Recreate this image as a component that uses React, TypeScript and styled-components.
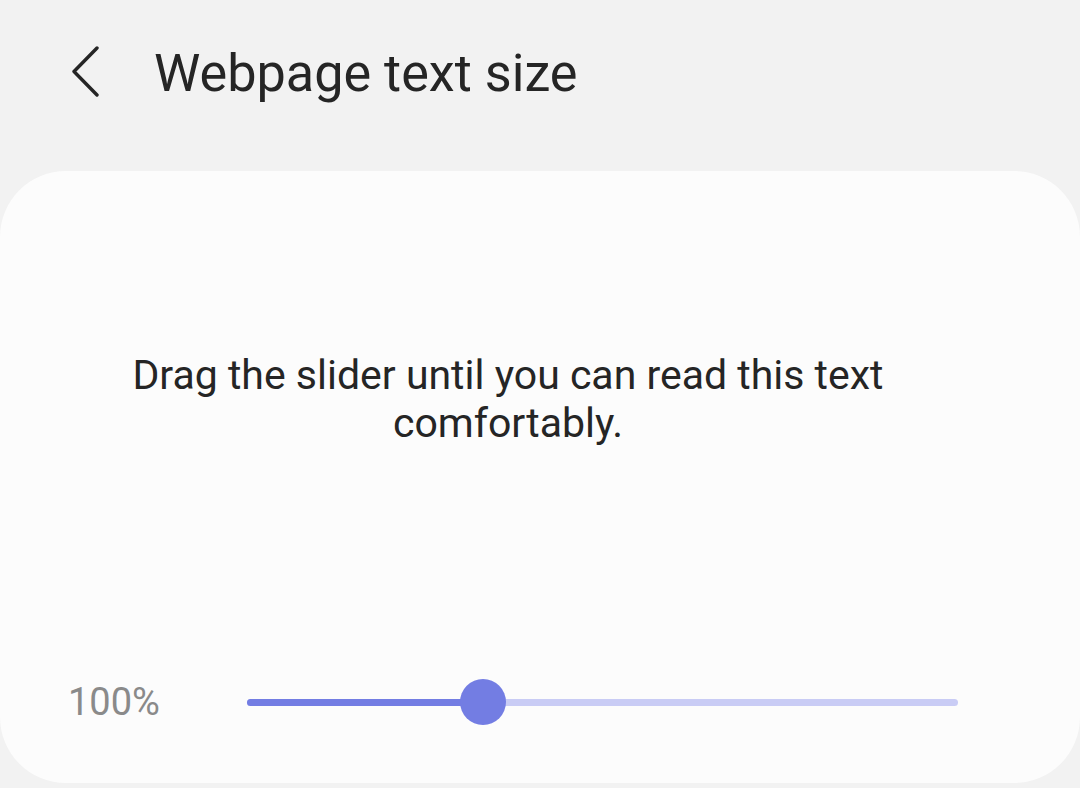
import React from "react";
import styled, { createGlobalStyle } from "styled-components";

const Global = createGlobalStyle`
  html, body { margin: 0; padding: 0; background: #f2f2f2; }
  body { font-family: Roboto, "Noto Sans", sans-serif; color: #252525; }
`;

const Page = styled.div`
  width: 1080px;
  height: 788px;
  display: flex;
  flex-direction: column;
  background: #f2f2f2;
  overflow: hidden;
`;

const Header = styled.header`
  height: 171px;
  display: flex;
  align-items: flex-start;
  padding-top: 46px;
  box-sizing: border-box;
  padding-left: 68px;
`;

const BackButton = styled.button`
  width: 36px;
  height: 52px;
  padding: 0;
  border: 0;
  background: transparent;
  display: flex;
  align-items: center;
  justify-content: center;
  margin-right: 50px;
`;

const Title = styled.h1`
  margin: 0;
  font-size: 52.2px;
  font-weight: 400;
  line-height: 56px;
  color: #252525;
  letter-spacing: 0;
`;

const Card = styled.section`
  height: 612px;
  background: #fcfcfc;
  border-radius: 66px;
  display: flex;
  flex-direction: column;
`;

const Message = styled.p`
  margin: 180px 0 0;
  padding: 0 150px 0 86px;
  text-align: center;
  font-size: 41px;
  line-height: 48px;
  color: #252525;
`;

const SliderRow = styled.div`
  margin-top: auto;
  margin-bottom: 58px;
  display: flex;
  align-items: center;
  padding-left: 68px;
  height: 46px;
`;

const Value = styled.span`
  width: 179px;
  font-size: 38px;
  color: #8a8a8a;
`;

const Track = styled.div`
  position: relative;
  width: 711px;
  height: 7px;
  border-radius: 4px;
  background: #c9ccf5;
`;

const Fill = styled.div`
  height: 100%;
  border-radius: 4px;
  background: #737de3;
`;

const Thumb = styled.div`
  position: absolute;
  top: 50%;
  width: 46px;
  height: 46px;
  margin-left: -23px;
  margin-top: -23px;
  border-radius: 50%;
  background: #737de3;
`;

export default function App() {
  const pct = (483 - 247) / 711;
  return (
    <Page>
      <Global />
      <Header>
        <BackButton aria-label="Back">
          <svg width="30" height="52" viewBox="0 0 30 52" fill="none">
            <path d="M26 2 L3 25.5 L26 49" stroke="#252525" strokeWidth="3.4" strokeLinecap="round" strokeLinejoin="round" />
          </svg>
        </BackButton>
        <Title>Webpage text size</Title>
      </Header>
      <Card>
        <Message>Drag the slider until you can read this text comfortably.</Message>
        <SliderRow>
          <Value>100%</Value>
          <Track>
            <Fill style={{ width: `${pct * 100}%` }} />
            <Thumb style={{ left: `${pct * 100}%` }} />
          </Track>
        </SliderRow>
      </Card>
    </Page>
  );
}
